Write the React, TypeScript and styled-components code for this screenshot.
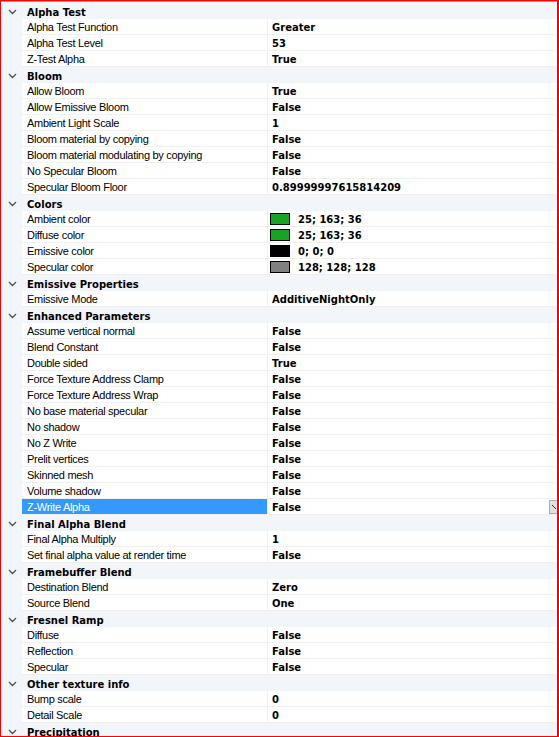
import React from "react";
import styled, { createGlobalStyle } from "styled-components";

const GlobalStyle = createGlobalStyle`
  html, body {
    margin: 0;
    padding: 0;
    background: #ffffff;
  }
`;

type Prop = { name: string; value: string; swatch?: string; selected?: boolean };
type Category = { title: string; props: Prop[] };

const categories: Category[] = [
  {
    title: "Alpha Test",
    props: [
      { name: "Alpha Test Function", value: "Greater" },
      { name: "Alpha Test Level", value: "53" },
      { name: "Z-Test Alpha", value: "True" },
    ],
  },
  {
    title: "Bloom",
    props: [
      { name: "Allow Bloom", value: "True" },
      { name: "Allow Emissive Bloom", value: "False" },
      { name: "Ambient Light Scale", value: "1" },
      { name: "Bloom material by copying", value: "False" },
      { name: "Bloom material modulating by copying", value: "False" },
      { name: "No Specular Bloom", value: "False" },
      { name: "Specular Bloom Floor", value: "0.89999997615814209" },
    ],
  },
  {
    title: "Colors",
    props: [
      { name: "Ambient color", value: "25; 163; 36", swatch: "#19a324" },
      { name: "Diffuse color", value: "25; 163; 36", swatch: "#19a324" },
      { name: "Emissive color", value: "0; 0; 0", swatch: "#000000" },
      { name: "Specular color", value: "128; 128; 128", swatch: "#808080" },
    ],
  },
  {
    title: "Emissive Properties",
    props: [{ name: "Emissive Mode", value: "AdditiveNightOnly" }],
  },
  {
    title: "Enhanced Parameters",
    props: [
      { name: "Assume vertical normal", value: "False" },
      { name: "Blend Constant", value: "False" },
      { name: "Double sided", value: "True" },
      { name: "Force Texture Address Clamp", value: "False" },
      { name: "Force Texture Address Wrap", value: "False" },
      { name: "No base material specular", value: "False" },
      { name: "No shadow", value: "False" },
      { name: "No Z Write", value: "False" },
      { name: "Prelit vertices", value: "False" },
      { name: "Skinned mesh", value: "False" },
      { name: "Volume shadow", value: "False" },
      { name: "Z-Write Alpha", value: "False", selected: true },
    ],
  },
  {
    title: "Final Alpha Blend",
    props: [
      { name: "Final Alpha Multiply", value: "1" },
      { name: "Set final alpha value at render time", value: "False" },
    ],
  },
  {
    title: "Framebuffer Blend",
    props: [
      { name: "Destination Blend", value: "Zero" },
      { name: "Source Blend", value: "One" },
    ],
  },
  {
    title: "Fresnel Ramp",
    props: [
      { name: "Diffuse", value: "False" },
      { name: "Reflection", value: "False" },
      { name: "Specular", value: "False" },
    ],
  },
  {
    title: "Other texture info",
    props: [
      { name: "Bump scale", value: "0" },
      { name: "Detail Scale", value: "0" },
    ],
  },
  { title: "Precipitation", props: [] },
];

const boldFont = `"DejaVu Sans", "Liberation Sans", sans-serif`;

const Frame = styled.div`
  box-sizing: border-box;
  width: 559px;
  height: 737px;
  border: 1px solid #ff0000;
  border-right-width: 2px;
  overflow: hidden;
  background: #ffffff;
  font-family: "Liberation Sans", Arial, sans-serif;
  font-size: 11px;
  color: #000000;
`;

const Grid = styled.div`
  border-top: 1px solid #a0a0a0;
  padding-top: 1px;
  display: flex;
  flex-direction: column;
`;

const CategoryRow = styled.div`
  height: 16px;
  display: flex;
  align-items: center;
  padding-top: 2px;
  box-sizing: border-box;
  background: #f2f5fa;
  font-family: ${boldFont};
  font-weight: bold;
  font-size: 10px;
`;

const Chevron = styled.div`
  width: 26px;
  display: flex;
  justify-content: center;
  padding-right: 4px;
  padding-bottom: 1px;
  box-sizing: border-box;
`;

const Row = styled.div`
  height: 16px;
  display: grid;
  grid-template-columns: 21px 245px 1px 1fr;
  background: #f2f5fa;
`;

const NameCell = styled.div<{ $selected?: boolean }>`
  display: flex;
  align-items: center;
  padding-left: 5px;
  white-space: nowrap;
  overflow: hidden;
  letter-spacing: -0.3px;
  border-bottom: 1px solid #f0f0f0;
  background: ${(p) => (p.$selected ? "#3399ff" : "#ffffff")};
  color: ${(p) => (p.$selected ? "#ffffff" : "#000000")};
`;

const Divider = styled.div`
  background: #f0f0f0;
`;

const ValueCell = styled.div`
  box-sizing: border-box;
  display: flex;
  align-items: center;
  gap: 8px;
  padding: 1px 0 0 4px;
  background: #ffffff;
  border-bottom: 1px solid #f0f0f0;
  font-family: ${boldFont};
  font-weight: bold;
  font-size: 10px;
  white-space: nowrap;
`;

const Swatch = styled.span<{ $color: string }>`
  box-sizing: border-box;
  width: 20px;
  height: 12px;
  margin: -1px 0 0 -2px;
  border: 1px solid #000000;
  background: ${(p) => p.$color};
  flex-shrink: 0;
`;

const DropButton = styled.div`
  margin: -1px 0 0 auto;
  width: 8px;
  height: 14px;
  box-sizing: border-box;
  border: 1px solid #adadad;
  border-right: none;
  background: #e1e1e1;
  display: flex;
  align-items: center;
  justify-content: flex-end;
`;

const ChevronIcon = () => (
  <svg width="9" height="6" viewBox="0 0 9 6">
    <path d="M1 1 L4.5 4.5 L8 1" fill="none" stroke="#555555" strokeWidth="1.4" />
  </svg>
);

const PropertyRow: React.FC<{ prop: Prop }> = ({ prop }) => (
  <Row>
    <div />
    <NameCell $selected={prop.selected}>{prop.name}</NameCell>
    <Divider />
    <ValueCell>
      {prop.swatch && <Swatch $color={prop.swatch} />}
      <span>{prop.value}</span>
      {prop.selected && (
        <DropButton>
          <svg width="6" height="6" viewBox="0 0 6 6">
            <path d="M1 1 L5 5" stroke="#333333" strokeWidth="1" />
          </svg>
        </DropButton>
      )}
    </ValueCell>
  </Row>
);

const App: React.FC = () => (
  <>
    <GlobalStyle />
    <Frame>
      <Grid>
        {categories.map((cat) => (
          <React.Fragment key={cat.title}>
            <CategoryRow>
              <Chevron>
                <ChevronIcon />
              </Chevron>
              {cat.title}
            </CategoryRow>
            {cat.props.map((p) => (
              <PropertyRow key={p.name} prop={p} />
            ))}
          </React.Fragment>
        ))}
      </Grid>
    </Frame>
  </>
);

export default App;
